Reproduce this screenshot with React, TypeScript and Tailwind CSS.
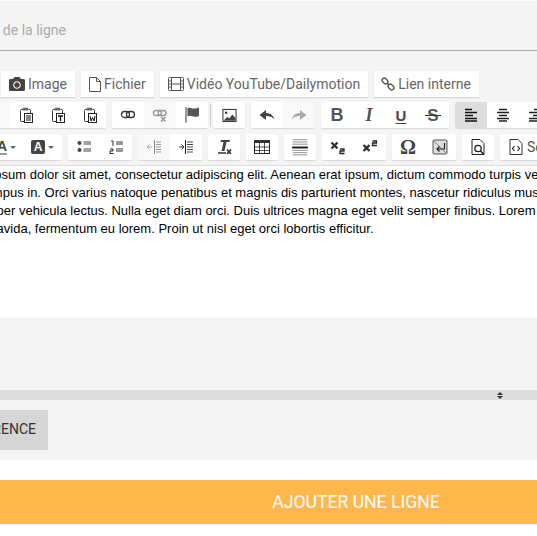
import React from "react";
import { FaCamera } from "react-icons/fa";

const S = ({ children, size = 16, className = "" }: { children: React.ReactNode; size?: number; className?: string }) => (
  <svg width={size} height={size} viewBox="0 0 16 16" className={className} fill="none">{children}</svg>
);

const Clip = ({ children }: { children: React.ReactNode }) => (
  <S>
    <path d="M5 2.500H3.500a1 1 0 0 0-1 1v10a1 1 0 0 0 1 1H6" stroke="#333" />
    <path d="M10.500 2.500h1a1 1 0 0 1 1 1V6" stroke="#333" />
    <rect x="4.500" y=".8" width="6" height="2.700" rx="1" fill="#666" />
    <rect x="6.500" y="6.500" width="8" height="9" fill="#fff" stroke="#222" />
    {children}
  </S>
);
const Lines = ({ d, c = "#222", w = 1.4 }: { d: string; c?: string; w?: number }) => <path d={d} stroke={c} strokeWidth={w} />;

const icons: Record<string, React.ReactNode> = {
  paste: <Clip><Lines d="M8 9h5M8 11h5M8 13h5" w={1} c="#111" /></Clip>,
  pasteT: <Clip><Lines d="M8 9h5M10.500 9v5" w={1.300} c="#111" /></Clip>,
  pasteW: <Clip><Lines d="M8 9l1 5 1.500-3.500L12 14l1-5" w={1} c="#111" /></Clip>,
  link: <S><rect x="1.500" y="4.500" width="8" height="6" rx="3" stroke="#333" strokeWidth="1.300" /><rect x="6.500" y="4.500" width="8" height="6" rx="3" stroke="#333" strokeWidth="1.300" /></S>,
  unlink: <S><rect x="1.500" y="3.500" width="8" height="5" rx="2.500" stroke="#999" strokeWidth="1.400" /><rect x="6" y="3.500" width="8" height="5" rx="2.500" stroke="#999" strokeWidth="1.400" /><Lines d="M9 10l4.500 4.500M13.500 10L9 14.500" c="#999" w={1.600} /></S>,
  flag: <S><path d="M2 0v15.500" stroke="#333" /><path d="M3.500 1c3-1 4 .5 6.500.5s3.500-.5 5-1v8.500c-1.500.8-3 1-4.500.8S5.500 8 3.500 9.500z" fill="#555" /></S>,
  image: <S size={15}><rect x="1" y="1.500" width="14" height="13" fill="#fff" stroke="#222" /><circle cx="4.500" cy="5" r="1.300" fill="#333" /><path d="M1.500 13.500l4-4 2.500 1.500 3-4 3.500 4v2.500z" fill="#444" /></S>,
  undo: <S><path d="M.5 8l6.500-5v3c4 0 7 2 8.500 6.500-2-2.500-4.500-3.500-8.500-3.500v4z" fill="#444" /></S>,
  redo: <S><path d="M15.500 8L9 3v3c-4 0-7 2-8.500 6.500 2-2.500 4.500-3.500 8.500-3.500v4z" fill="#aaa" /></S>,
  left: <S><Lines d="M2 2.500h7M2 5.500h12M2 8.500h8M2 11.500h12M2 14h12" c="#111" w={1.300} /></S>,
  center: <S><Lines d="M4 2.500h8M2 5.500h12M4 8.500h8M2 11.500h12M4 14h8" c="#222" w={1.300} /></S>,
  right: <S><Lines d="M7 2.500h7M2 5.500h12M6 8.500h8M2 11.500h12M2 14h12" c="#222" w={1.300} /></S>,
  bullets: <S><circle cx="3.500" cy="4" r="2" fill="#444" /><circle cx="3.500" cy="11" r="2" fill="#444" /><Lines d="M7.500 3h7.500M7.500 5h7.500M7.500 10h7.500M7.500 12h7.500" c="#444" w={1} /></S>,
  numbers: <S><Lines d="M3 2h2v5M8 3h7M8 5h7M8 10h7M8 12h7" c="#333" w={1} /><Lines d="M2 10h3v2H2v2.500h3.500" c="#222" w={1} /></S>,
  outdent: <S><Lines d="M8.500 1v14" c="#888" w={1} /><Lines d="M10 3h5M10 5.500h5M10 8h5M10 10.500h5M10 13h5" c="#999" w={1} /><Lines d="M1 8h5M3.500 5.500L1 8l2.500 2.500" c="#aaa" w={1} /></S>,
  indent: <S><Lines d="M7.500 1v14" c="#222" w={1} /><Lines d="M9 3h6M9 5.500h6M9 8h6M9 10.500h6M9 13h6" c="#444" w={1} /><Lines d="M1 8h5M3.500 5.500L6 8l-2.500 2.500" c="#333" w={1} /></S>,
  clear: <S><path d="M5 1h9l-.5 2h-3l-2 9H5.500l2-9h-3z" fill="#444" /><Lines d="M2 14h8" c="#333" w={1.300} /><Lines d="M11 10.500l4 4.500M15 10.500l-4 4.500" c="#333" w={1.700} /></S>,
  table: <S><rect x=".5" y="1.500" width="15" height="13" fill="#fff" stroke="#222" /><path d="M.5 1h15v3H.5z" fill="#333" /><Lines d="M.5 8h15M.5 11.500h15M5.500 4v11M10.500 4v11" c="#222" w={.8} /></S>,
  hr: <S size={18}><Lines d="M1.500 1.500h13M1.500 3.500h13M1.500 5.500h13M1.500 11h13M1.500 13h13M1.500 15h13" c="#888" w={.8} /><Lines d="M1 8.500h14" c="#222" w={1.800} /></S>,
  sub: <S><Lines d="M1.500 3.500l6 6M7.500 3.500l-6 6" c="#333" w={2.400} /><Lines d="M10 10h4v2h-4v2.500h4.500" c="#222" w={1.300} /></S>,
  sup: <S><Lines d="M1.500 6l6 6M7.500 6l-6 6" c="#333" w={2.400} /><Lines d="M10.500 2h4v2h-4v2.500h4.500" c="#222" w={1.300} /></S>,
  iframe: <S><rect x="1" y="1" width="14" height="14" rx="1" fill="#ddd" stroke="#555" /><path d="M1 1l14 14" stroke="#888" /><Lines d="M12.500 4v6H5M7.500 7.500L5 10l2.500 2.500" c="#222" w={1.200} /></S>,
  preview: <S><path d="M2 .5h8l4 4V15.500H2z" fill="#fff" stroke="#222" /><circle cx="8" cy="9.500" r="3.200" stroke="#222" strokeWidth="1.300" /><Lines d="M10.500 12l3.500 3.500" c="#222" w={1.600} /></S>,
  source: <S><path d="M2 .5h8l4 4V15.500H2z" fill="#fff" stroke="#333" /><Lines d="M6.500 7L4.500 9.500l2 2.500M9.500 7l2 2.500-2 2.500" c="#222" w={1.200} /></S>,
};

const Txt = ({ c, children }: { c: string; children: React.ReactNode }) => <span className={c}>{children}</span>;

const glyphs: Record<string, React.ReactNode> = {
  bold: <Txt c="font-['Liberation_Sans'] font-bold text-[18px] text-[#555] leading-none">B</Txt>,
  italic: <Txt c="font-['Liberation_Serif'] italic font-bold text-[18px] text-[#555] leading-none">I</Txt>,
  underline: <Txt c="font-['Liberation_Sans'] font-bold text-[15px] text-[#444] leading-none underline underline-offset-2">U</Txt>,
  strike: (
    <span className="relative font-['Liberation_Sans'] text-[17px] font-bold leading-none text-[#555]">
      S
      <span className="absolute left-[-2px] right-[-2px] top-[8px] h-px bg-[#333]" />
    </span>
  ),
  omega: <Txt c="font-['Liberation_Serif'] font-bold text-[20px] text-[#444] leading-none">Ω</Txt>,
};

const Caret = ({ c = "#666" }: { c?: string }) => <span className="ml-[3px] h-0 w-0 border-x-[3px] border-t-[3px] border-x-transparent" style={{ borderTopColor: c }} />;

const Btn = ({ n, dis, active }: { n?: string; dis?: boolean; active?: boolean }) => (
  <div className={`flex h-[26px] w-[32px] items-center justify-center ${active ? "bg-[#dddddd]" : dis ? "bg-[#f8f8f8]" : "bg-white"}`}>
    {n ? icons[n] ?? glyphs[n] : null}
  </div>
);

const Group = ({ children }: { children: React.ReactNode }) => (
  <div className="flex overflow-hidden rounded-[2px] shadow-[0_1px_1px_rgba(0,0,0,0.12)]">{children}</div>
);

const TopBtn = ({ icon, children, gap = "gap-[3px]", pad = "px-[8px]" }: { icon: React.ReactNode; children: React.ReactNode; gap?: string; pad?: string }) => (
  <div className={`flex h-[26px] items-center bg-white text-[14px] text-[#666] shadow-[0_1px_1px_rgba(0,0,0,0.12)] ${gap} ${pad}`}>
    {icon}
    <span>{children}</span>
  </div>
);

const Film = () => (
  <svg width="16" height="14" viewBox="0 0 16 14" fill="none">
    <rect x=".5" y=".5" width="15" height="13" rx="1" stroke="#555" />
    <path d="M3.500 1v12M12.500 1v12M3.500 7h9M1 4h2.500M1 7h2.500M1 10h2.500M12.500 4H15M12.500 7H15M12.500 10H15" stroke="#555" />
  </svg>
);

const FileO = () => (
  <svg width="12" height="15" viewBox="0 0 12 15" fill="none">
    <path d="M.5.5h7l4 4v10H.5zM7.500.5v4h4" stroke="#555" />
  </svg>
);

const LinkO = () => (
  <svg width="14" height="14" viewBox="0 0 14 14" fill="none">
    <rect x="-3.200" y="-2.200" width="6.400" height="4.400" rx="2.200" transform="translate(4 4) rotate(45)" stroke="#555" strokeWidth="1.400" />
    <rect x="-3.200" y="-2.200" width="6.400" height="4.400" rx="2.200" transform="translate(10 10) rotate(45)" stroke="#555" strokeWidth="1.400" />
    <path d="M6 6l2 2" stroke="#555" strokeWidth="1.400" />
  </svg>
);

const lines = [
  "Lorem ipsum dolor sit amet, consectetur adipiscing elit. Aenean erat ipsum, dictum commodo turpis vel, mattis",
  "tempus in. Orci varius natoque penatibus et magnis dis parturient montes, nascetur ridiculus mus. Sed semper",
  "semper vehicula lectus. Nulla eget diam orci. Duis ultrices magna eget velit semper finibus. Lorem ipsum dolor",
  "gravida, fermentum eu lorem. Proin ut nisl eget orci lobortis efficitur.",
];
const offsets = ["ml-[11px]", "ml-[41px]", "ml-[32px]", "ml-[45px]"];

export default function App() {
  return (
    <div className="h-[536px] w-[537px] overflow-hidden bg-white font-['Roboto',sans-serif]">
      <div className="ml-[-60px] w-[832px]">
        <div className="mt-px h-[459px] bg-[#f4f4f4]">
          <div className="h-[50px] border-b border-[#aaaaaa] pl-[31px] pt-[19px] text-[14px] leading-[20px] text-[#aaaaaa]">Titre de la ligne</div>
          <div className="ml-[61px] mt-[20px] flex gap-[6px]">
            <TopBtn icon={<FaCamera className="text-[#444]" size={16} />}>Image</TopBtn>
            <TopBtn icon={<FileO />}>Fichier</TopBtn>
            <TopBtn icon={<Film />}>Vidéo YouTube/Dailymotion</TopBtn>
            <TopBtn icon={<LinkO />} gap="gap-[3px]" pad="pl-[7px] pr-[8px]">Lien interne</TopBtn>
          </div>
          <div className="ml-[38px] mt-[5px] flex gap-[6px]">
            <Group><Btn dis /><Btn n="paste" /><Btn n="pasteT" /><Btn n="pasteW" /></Group>
            <Group><Btn n="link" /><Btn n="unlink" dis /><Btn n="flag" /></Group>
            <div className="-mx-[4px] my-[2px] w-px bg-[#cccccc]" />
            <Group><Btn n="image" /></Group>
            <Group><Btn n="undo" /><Btn n="redo" dis /></Group>
            <Group><Btn n="bold" /><Btn n="italic" /><Btn n="underline" /><Btn n="strike" /></Group>
            <Group><Btn n="left" active /><Btn n="center" /><Btn n="right" /></Group>
          </div>
          <div className="ml-[37px] mt-[6px] flex gap-[6px]">
            <Group>
              <div className="flex h-[26px] w-[46px] items-center justify-end bg-white pr-[7px]">
                <span className="border-b-2 border-[#999] font-['Liberation_Sans'] text-[14px] font-bold leading-[14px] text-[#444]">A</span><Caret />
              </div>
              <div className="flex h-[26px] w-[39px] items-center justify-center bg-white">
                <span className="flex h-[14px] w-[14px] items-center justify-center rounded-[2px] bg-[#444] font-['Liberation_Sans'] text-[12px] font-bold leading-none text-white">A</span><Caret />
              </div>
            </Group>
            <Group><Btn n="bullets" /><Btn n="numbers" /></Group>
            <Group><Btn n="outdent" dis /><Btn n="indent" /></Group>
            <Group><Btn n="clear" /></Group>
            <Group><Btn n="table" /></Group>
            <Group><Btn n="hr" /></Group>
            <Group><Btn n="sub" /><Btn n="sup" /></Group>
            <Group><Btn n="omega" /><Btn n="iframe" /></Group>
            <Group><Btn n="preview" /></Group>
            <Group>
              <div className="flex h-[26px] w-[90px] items-center gap-[3px] bg-white pl-[8px] text-[14px] text-[#555]">{icons.source}<span>Source</span></div>
            </Group>
          </div>
          <div className="mt-[5px] h-[153px] border-t border-[#dddddd] bg-white font-['Liberation_Sans',sans-serif] text-[13px] leading-[18px] text-black">
            {lines.map((l, i) => (
              <div key={i} className={`whitespace-nowrap ${offsets[i]}`}>{l}</div>
            ))}
          </div>
          <div className="h-[72px]" />
          <div className="flex h-[10px] items-center bg-[#dddddd] pl-[557px]">
            <span className="flex flex-col gap-px">
              <span className="h-0 w-0 border-x-[3px] border-b-[3px] border-x-transparent border-b-[#333]" />
              <span className="h-0 w-0 border-x-[3px] border-t-[3px] border-x-transparent border-t-[#333]" />
            </span>
          </div>
          <div className="mt-[10px] flex h-[40px] w-[108px] items-center justify-end bg-[#d6d6d6] pb-px pr-[12px] text-[14px] text-[#333]">RÉFÉRENCE</div>
        </div>
        <div className="mt-[20px] flex h-[44px] items-center justify-center bg-[#ffb74d] text-[17.6px] font-normal text-white">AJOUTER UNE LIGNE</div>
      </div>
    </div>
  );
}
